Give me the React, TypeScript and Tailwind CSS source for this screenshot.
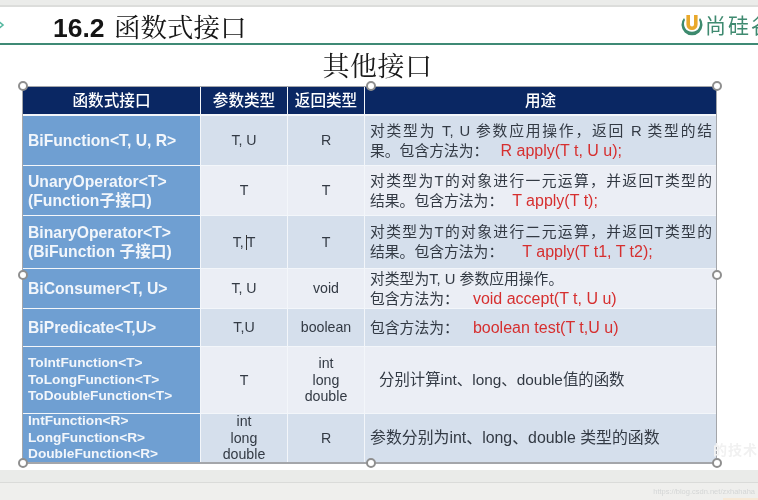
import type { ReactNode } from "react";

const SANS = "font-['Liberation_Sans','Noto_Sans_CJK_SC',sans-serif]";
const SERIF = "font-['Liberation_Serif','Noto_Serif_CJK_SC',serif]";

type Row = {
  name: ReactNode;
  nameSize?: string;
  params: ReactNode;
  ret: ReactNode;
  usage: ReactNode;
  usageClass?: string;
  tint: boolean;
};

function Fill({ children }: { children: ReactNode }) {
  // stretched first line, the slide text is justified to the cell width
  return <span className="block [text-align-last:justify]">{children}</span>;
}

function Red({ children, className = "" }: { children: ReactNode; className?: string }) {
  return <span className={"text-[16px] text-[#d62f2f] " + className}>{children}</span>;
}

const rows: Row[] = [
  {
    name: "BiFunction<T, U, R>",
    params: "T, U",
    ret: "R",
    tint: true,
    usage: (
      <>
        <Fill>对类型为 T, U 参数应用操作，返回 R 类型的结</Fill>
        <span className="block">
          果。包含方法为： <Red className="ml-2">R apply(T t, U u);</Red>
        </span>
      </>
    ),
  },
  {
    name: (
      <>
        UnaryOperator&lt;T&gt;
        <br />
        (Function子接口)
      </>
    ),
    params: "T",
    ret: "T",
    tint: false,
    usage: (
      <>
        <Fill>对类型为T的对象进行一元运算，并返回T类型的</Fill>
        <span className="block">
          结果。包含方法为：<Red className="ml-[9px]">T apply(T t);</Red>
        </span>
      </>
    ),
  },
  {
    name: (
      <>
        BinaryOperator&lt;T&gt;
        <br />
        (BiFunction 子接口)
      </>
    ),
    params: (
      <span className="inline-flex items-center">
        T,
        <span className="ml-[2px] h-[15px] w-px bg-[#333]" />
        T
      </span>
    ),
    ret: "T",
    tint: true,
    usage: (
      <>
        <Fill>对类型为T的对象进行二元运算，并返回T类型的</Fill>
        <span className="block">
          结果。包含方法为： <Red className="ml-[15px]">T apply(T t1, T t2);</Red>
        </span>
      </>
    ),
  },
  {
    name: "BiConsumer<T, U>",
    params: "T, U",
    ret: "void",
    tint: false,
    usage: (
      <>
        <span className="block">对类型为T, U 参数应用操作。</span>
        <span className="block">
          包含方法为： <Red className="ml-[10px]">void accept(T t, U u)</Red>
        </span>
      </>
    ),
  },
  {
    name: "BiPredicate<T,U>",
    params: "T,U",
    ret: "boolean",
    tint: true,
    usage: (
      <span className="block">
        包含方法为： <Red className="ml-[10px]">boolean test(T t,U u)</Red>
      </span>
    ),
  },
  {
    name: (
      <>
        ToIntFunction&lt;T&gt;
        <br />
        ToLongFunction&lt;T&gt;
        <br />
        ToDoubleFunction&lt;T&gt;
      </>
    ),
    nameSize: "text-[13.7px] leading-[16.5px]",
    params: "T",
    ret: (
      <>
        int
        <br />
        long
        <br />
        double
      </>
    ),
    tint: false,
    usage: "分别计算int、long、double值的函数",
    usageClass: "pl-[14px] text-[15.4px]",
  },
  {
    name: (
      <>
        IntFunction&lt;R&gt;
        <br />
        LongFunction&lt;R&gt;
        <br />
        DoubleFunction&lt;R&gt;
      </>
    ),
    nameSize: "text-[13.7px] leading-[16.5px]",
    params: (
      <>
        int
        <br />
        long
        <br />
        double
      </>
    ),
    ret: "R",
    tint: true,
    usage: "参数分别为int、long、double 类型的函数",
    usageClass: "pl-[5px] text-[15.9px]",
  },
];

function Handle({ className }: { className: string }) {
  return (
    <span
      className={
        "absolute h-[10px] w-[10px] rounded-full border-2 border-[#8f8f8f] bg-white " + className
      }
    />
  );
}

function Logo() {
  return (
    <div className="flex items-center gap-[2px]">
      <svg width="22" height="23" viewBox="0 0 22 23" className="shrink-0">
        <path d="M3 4A10.5 10.5 0 1 0 19 4L18 6A8 8 0 1 1 4 6Z" fill="#3d8a6e" />
        <path d="M7.2 1v9.5a3.8 3.8 0 0 0 7.6 0V1" fill="none" stroke="#e9a92c" strokeWidth="3.6" />
      </svg>
      <span className="whitespace-nowrap text-[21px] font-normal leading-none tracking-[2px] text-[#3f8a70]">尚硅谷</span>
    </div>
  );
}

function Table() {
  const cell = "flex items-center justify-center text-center text-[14.2px] leading-[16.5px] text-[#333a44]";
  return (
    <div className="relative ml-[22px] w-[695px] border border-b-[2px] border-[#a4a6aa]">
      <div className="grid grid-cols-[177px_86px_76px_351px] grid-rows-[28px_49px_49px_52px_39px_37px_66px_48px] gap-[1px] bg-[#f3f6fa]">
        {["函数式接口", "参数类型", "返回类型", "用途"].map((h) => (
          <div key={h} className="mb-[1px] flex items-center justify-center bg-[#0a2763] text-[15.6px] font-medium text-white">
            {h}
          </div>
        ))}
        {rows.map((r, i) => {
          const bg = r.tint ? "bg-[#d5dfec]" : "bg-[#ebeef5]";
          return (
            <div key={i} className="contents">
              <div className={"flex items-center bg-[#6f9fd2] pl-[5px] font-bold text-[#f2f6fb] " + (r.nameSize ?? "text-[15.7px] leading-[19px]")}>
                <div>{r.name}</div>
              </div>
              <div className={cell + " " + bg}>
                <div>{r.params}</div>
              </div>
              <div className={cell + " " + bg}>
                <div>{r.ret}</div>
              </div>
              <div className={"flex items-center pr-[4px] leading-[20px] text-[#333a44] " + (r.usageClass ?? "pl-[5px] text-[14.8px]") + " " + bg}>
                <div className="w-full">{r.usage}</div>
              </div>
            </div>
          );
        })}
      </div>
      <Handle className="-left-[5px] -top-[6px]" />
      <Handle className="left-[343px] -top-[6px]" />
      <Handle className="-right-[6px] -top-[6px]" />
      <Handle className="-left-[5px] top-[183px]" />
      <Handle className="-right-[6px] top-[183px]" />
      <Handle className="-bottom-[6px] -left-[5px]" />
      <Handle className="-bottom-[6px] left-[343px]" />
      <Handle className="-bottom-[6px] -right-[6px]" />
    </div>
  );
}

export default function App() {
  return (
    <div className={"relative flex h-[500px] w-[758px] flex-col overflow-hidden bg-[#ecedeb] blur-[0.35px] " + SANS}>
      <div className="h-[5px] shrink-0 bg-[#ebecea]" />
      <div className="h-[2px] shrink-0 bg-[#dcdddb]" />
      <div className="flex h-[463px] shrink-0 flex-col bg-white">
        <header className="flex h-[38px] shrink-0 items-center border-b-[2px] border-[#3f8a75]">
          <svg width="5" height="14" viewBox="0 0 5 14" className="shrink-0">
            <path d="M-3 2l6 5-6 5" fill="none" stroke="#55b8a0" strokeWidth="1.6" />
          </svg>
          <h1 className="ml-[48px] flex-1 pt-[7px] text-[26.5px] leading-none text-[#151515]">
            <span className="font-bold">16.2</span> <span className={"ml-[2px] font-normal " + SERIF}>函数式接口</span>
          </h1>
          <div className="w-[77px] shrink-0 overflow-hidden">
            <div className="w-[100px]">
              <Logo />
            </div>
          </div>
        </header>
        <h2 className={"mb-[2px] mt-[6px] pr-[3px] text-center text-[27px] font-normal leading-[33px] tracking-[0.5px] text-[#1a1a1a] " + SERIF}>其他接口</h2>
        <Table />
        <span className="absolute right-0 top-[440px] text-[14px] font-bold tracking-[1px] text-[#f1f1f1]">的技术</span>
      </div>
      <div className="h-[13px] shrink-0 border-b border-[#dadbd9] bg-[#eaebe9]" />
      <div className="flex-1 bg-[#efefed] pr-[3px] text-right text-[7.5px] leading-[17px] text-[#d4d6d6]">https://blog.csdn.net/zxhahaha</div>
      <span className="absolute bottom-0 right-0 h-[2px] w-[35px] bg-[#f6e8d6]" />
    </div>
  );
}
